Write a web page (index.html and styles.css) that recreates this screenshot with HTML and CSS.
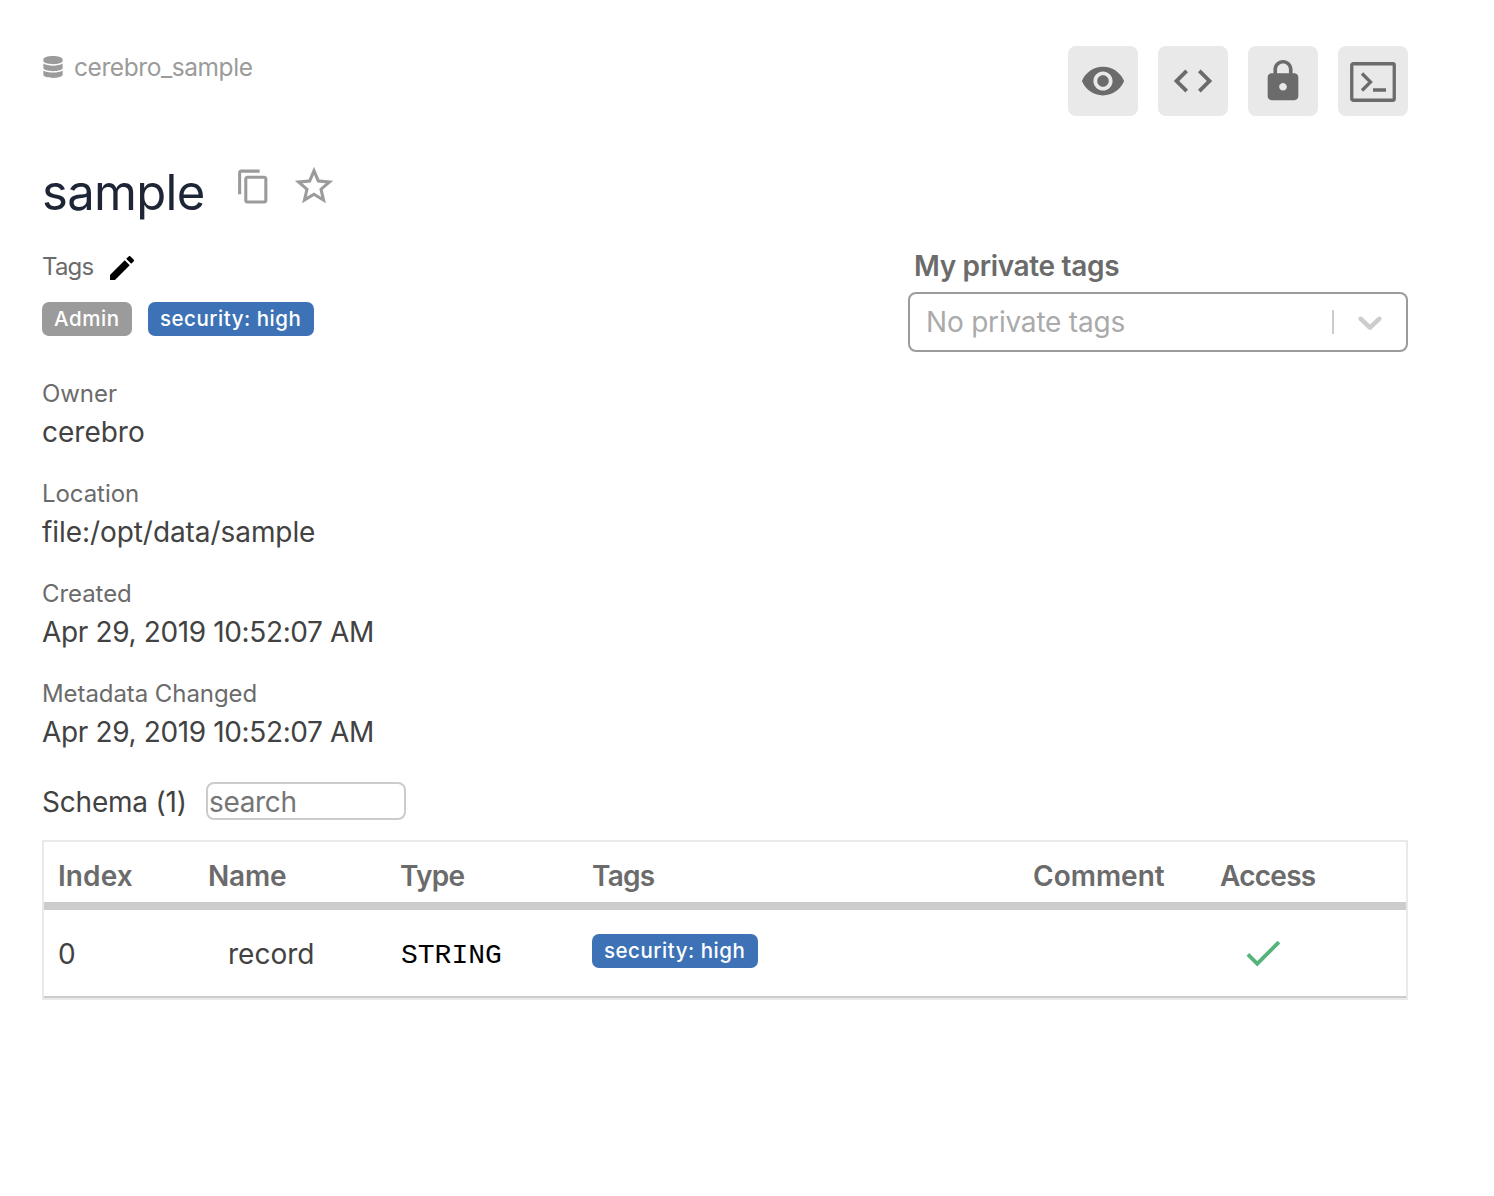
FILE: index.html
```html
<!DOCTYPE html>
<html lang="en">
<head>
<meta charset="utf-8">
<title>sample</title>
<link rel="stylesheet" href="styles.css">
</head>
<body>
<main class="page">
  <header class="topbar">
    <div class="breadcrumb">
      <svg class="icon-db" viewBox="0 0 448 512"><path d="M448 73.143v45.714C448 159.143 347.667 192 224 192S0 159.143 0 118.857V73.143C0 32.857 100.333 0 224 0s224 32.857 224 73.143zM448 176v102.857C448 319.143 347.667 352 224 352S0 319.143 0 278.857V176c48.125 33.143 136.208 48.572 224 48.572S399.874 209.143 448 176zm0 160v102.857C448 479.143 347.667 512 224 512S0 479.143 0 438.857V336c48.125 33.143 136.208 48.572 224 48.572S399.874 369.143 448 336z"/></svg>
      <span class="crumb">cerebro_sample</span>
    </div>
    <div class="actions">
      <button class="action"><svg viewBox="0 0 24 24"><path d="M12 4.5C7 4.5 2.73 7.61 1 12c1.73 4.39 6 7.5 11 7.5s9.27-3.11 11-7.5c-1.73-4.39-6-7.5-11-7.5zM12 17c-2.76 0-5-2.24-5-5s2.24-5 5-5 5 2.24 5 5-2.24 5-5 5zm0-8c-1.66 0-3 1.34-3 3s1.34 3 3 3 3-1.34 3-3-1.34-3-3-3z"/></svg></button>
      <button class="action"><svg viewBox="0 0 24 24"><path d="M9.4 16.6L4.8 12l4.6-4.6L8 6l-6 6 6 6 1.4-1.4zm5.2 0l4.6-4.6-4.6-4.6L16 6l6 6-6 6-1.4-1.4z"/></svg></button>
      <button class="action"><svg viewBox="0 0 24 24"><path d="M18 8h-1V6c0-2.76-2.24-5-5-5S7 3.24 7 6v2H6c-1.1 0-2 .9-2 2v10c0 1.1.9 2 2 2h12c1.1 0 2-.9 2-2V10c0-1.1-.9-2-2-2zm-6 9c-1.1 0-2-.9-2-2s.9-2 2-2 2 .9 2 2-.9 2-2 2zm3.1-9H8.9V6c0-1.71 1.39-3.1 3.1-3.1 1.71 0 3.1 1.39 3.1 3.1v2z"/></svg></button>
      <button class="action"><svg class="icon-terminal" viewBox="0 0 46 40"><rect x="1.75" y="1.75" width="42.5" height="36.5" rx="1.5"/><path d="M12 11.5L20.5 20L12 28.5M23 28H36"/></svg></button>
    </div>
  </header>

  <div class="title-row">
    <h1 class="title">sample</h1>
    <svg class="icon-copy" viewBox="0 0 24 24"><path d="M16 1H4c-1.1 0-2 .9-2 2v14h2V3h12V1zm3 4H8c-1.1 0-2 .9-2 2v14c0 1.1.9 2 2 2h11c1.1 0 2-.9 2-2V7c0-1.1-.9-2-2-2zm0 16H8V7h11v14z"/></svg>
    <svg class="icon-star" viewBox="0 0 24 24"><path d="M22 9.24l-7.19-.62L12 2 9.19 8.63 2 9.24l5.46 4.73L5.82 21 12 17.27 18.18 21l-1.63-7.03L22 9.24zM12 15.4l-3.76 2.27 1-4.28-3.32-2.88 4.38-.38L12 6.1l1.71 4.04 4.38.38-3.32 2.88 1 4.28L12 15.4z"/></svg>
  </div>

  <div class="details">
    <section class="info">
      <div class="label tags-label"><span>Tags</span><svg class="icon-edit" viewBox="0 0 24 24"><path d="M3 17.25V21h3.75L17.81 9.94l-3.75-3.75L3 17.25zM20.71 7.04c.39-.39.39-1.02 0-1.41l-2.34-2.34c-.39-.39-1.02-.39-1.41 0l-1.83 1.83 3.75 3.75 1.83-1.83z"/></svg></div>
      <div class="chips"><span class="chip chip-admin">Admin</span><span class="chip chip-security">security: high</span></div>
      <dl class="facts">
        <div class="fact"><dt class="label">Owner</dt><dd class="value v-owner">cerebro</dd></div>
        <div class="fact"><dt class="label">Location</dt><dd class="value v-location">file:/opt/data/sample</dd></div>
        <div class="fact"><dt class="label">Created</dt><dd class="value v-date">Apr 29, 2019 10:52:07 AM</dd></div>
        <div class="fact"><dt class="label">Metadata Changed</dt><dd class="value v-date">Apr 29, 2019 10:52:07 AM</dd></div>
      </dl>
    </section>
    <aside class="private">
      <div class="private-title"><span>My private tags</span></div>
      <div class="select">
        <span class="placeholder">No private tags</span>
        <span class="divider"></span>
        <svg class="icon-chevron" viewBox="0 0 20 20"><path d="M4.516 7.548c0.436-0.446 1.043-0.481 1.576 0l3.908 3.747 3.908-3.747c0.533-0.481 1.141-0.446 1.574 0 0.436 0.445 0.408 1.197 0 1.615-0.406 0.418-4.695 4.502-4.695 4.502-0.217 0.223-0.502 0.335-0.787 0.335s-0.57-0.112-0.789-0.335c0 0-4.287-4.084-4.695-4.502s-0.436-1.17 0-1.615z"/></svg>
      </div>
    </aside>
  </div>

  <div class="schema-row">
    <span class="schema-title">Schema (1)</span>
    <input class="search" type="text" placeholder="search">
  </div>

  <div class="schema">
    <div class="row head">
      <span class="h-index">Index</span><span class="h-name">Name</span><span class="h-type">Type</span><span class="h-tags">Tags</span><span class="h-comment">Comment</span><span class="h-access">Access</span>
    </div>
    <div class="row body">
      <span class="c-index">0</span>
      <span class="c-name">record</span>
      <span class="c-type">STRING</span>
      <span class="c-tags"><span class="chip chip-security">security: high</span></span>
      <span></span>
      <span class="c-access"><svg class="icon-check" viewBox="0 0 24 24"><path d="M9 16.17L4.83 12l-1.42 1.41L9 19 21 7l-1.41-1.41z"/></svg></span>
    </div>
  </div>
</main>
</body>
</html>
```
FILE: styles.css
```css
* { box-sizing: border-box; }

body {
  margin: 0;
  background: #fff;
  color: #424242;
  font-family: Inter, "Liberation Sans", sans-serif;
  font-size: 28px;
}

svg { display: block; flex: none; }

.page { width: 1408px; padding: 46px 0 0 42px; }

.topbar { display: flex; justify-content: space-between; height: 70px; }
.breadcrumb { display: flex; align-items: center; gap: 11px; height: 42px; padding-left: 1px; color: #9b9b9b; }
.crumb { font-size: 24.5px; letter-spacing: -0.42px; }
.icon-db { width: 20px; height: 22px; fill: #9b9b9b; }
.actions { display: flex; gap: 20px; }
.action {
  display: flex; align-items: center; justify-content: center;
  width: 70px; height: 70px; padding: 0; border: 0; border-radius: 8px; background: #e9e9e9;
}
.action svg { width: 46px; height: 46px; fill: #6b6b6b; }
.action .icon-terminal { height: 40px; margin: 2px 0 0; fill: none; stroke: #6b6b6b; stroke-width: 3.3px; }

.title-row { display: flex; align-items: flex-start; height: 84px; margin-top: 47px; }
.title { width: 193px; margin: 0; padding-top: 1px; font-size: 49px; font-weight: 400; line-height: 58px; letter-spacing: -0.7px; color: #1e2536; }
.icon-copy { width: 37px; height: 37px; margin-top: 5px; fill: #9b9b9b; }
.icon-star { width: 46px; height: 46px; margin-left: 19px; fill: #9b9b9b; }

.details { display: flex; justify-content: space-between; }
.label { height: 40px; font-size: 24px; line-height: 42px; color: #6b6b6b; letter-spacing: -0.07px; }
.tags-label { display: flex; align-items: center; gap: 13px; letter-spacing: -0.8px; }
.icon-edit { width: 32px; height: 32px; margin-top: 2px; fill: #000; }
.chips { display: flex; gap: 16px; margin-top: 15px; }
.chip {
  display: inline-block; height: 34px; padding-left: 12px; border-radius: 7px;
  color: #fff; font-size: 20.5px; font-weight: 500; line-height: 34px; letter-spacing: 0.52px; white-space: nowrap;
}
.chip-admin { width: 90px; background: #9b9b9b; letter-spacing: 0.6px; }
.chip-security { width: 166px; background: #3e72b6; }
.facts { display: flex; flex-direction: column; gap: 22px; margin: 37px 0 0; }
.value { margin: 0; line-height: 38px; white-space: nowrap; }
.v-owner { letter-spacing: 0; }
.v-location { letter-spacing: -0.07px; }
.v-date { letter-spacing: -0.36px; }

.private { width: 500px; }
.private-title { padding-left: 6px; font-weight: 600; line-height: 38px; letter-spacing: -0.34px; color: #6b6b6b; }
.select {
  display: flex; align-items: center; height: 60px; margin-top: 7px; padding: 0 16px;
  border: 2px solid #9b9b9b; border-radius: 8px;
}
.placeholder { flex: 1; color: #aaa; letter-spacing: -0.2px; }
.divider { width: 2px; height: 24px; margin-right: 16px; background: #ccc; }
.icon-chevron { width: 40px; height: 40px; fill: #ccc; }

.schema-row { display: flex; align-items: center; height: 38px; margin-top: 31px; }
.schema-title { width: 164px; height: 38px; line-height: 40px; white-space: nowrap; letter-spacing: -0.2px; }
.search {
  width: 200px; height: 38px; padding: 2px 1px 0; border: 2px solid #ccc; border-radius: 8px;
  background: #fff; font: inherit; letter-spacing: -0.35px;
}
.search::placeholder { color: #757575; }

.schema { margin-top: 20px; border: 2px solid #e9e9e9; }
.row { display: grid; grid-template-columns: 150px 192px 192px 440px 188px 1fr; align-items: center; padding-left: 14px; }
.head { height: 68px; padding-top: 8px; border-bottom: 8px solid #ccc; color: #6b6b6b; font-weight: 600; }
.h-index { letter-spacing: 0.1px; }
.h-name { letter-spacing: -0.2px; }
.h-type { letter-spacing: -0.7px; }
.h-tags { letter-spacing: -0.8px; }
.h-comment { padding-left: 1px; letter-spacing: 0; }
.h-access { letter-spacing: -0.75px; }
.body { height: 88px; border-bottom: 2px solid #ccc; }
.c-index, .c-name { padding-top: 2px; }
.c-name { padding-left: 20px; }
.c-type { padding: 5px 0 0 1px; color: #000; font-family: "Liberation Mono", monospace; font-size: 28px; }
.c-tags { display: flex; margin-top: -4px; }
.c-access { padding-left: 20px; }
.icon-check { width: 46px; height: 46px; fill: #56b37b; }
```
